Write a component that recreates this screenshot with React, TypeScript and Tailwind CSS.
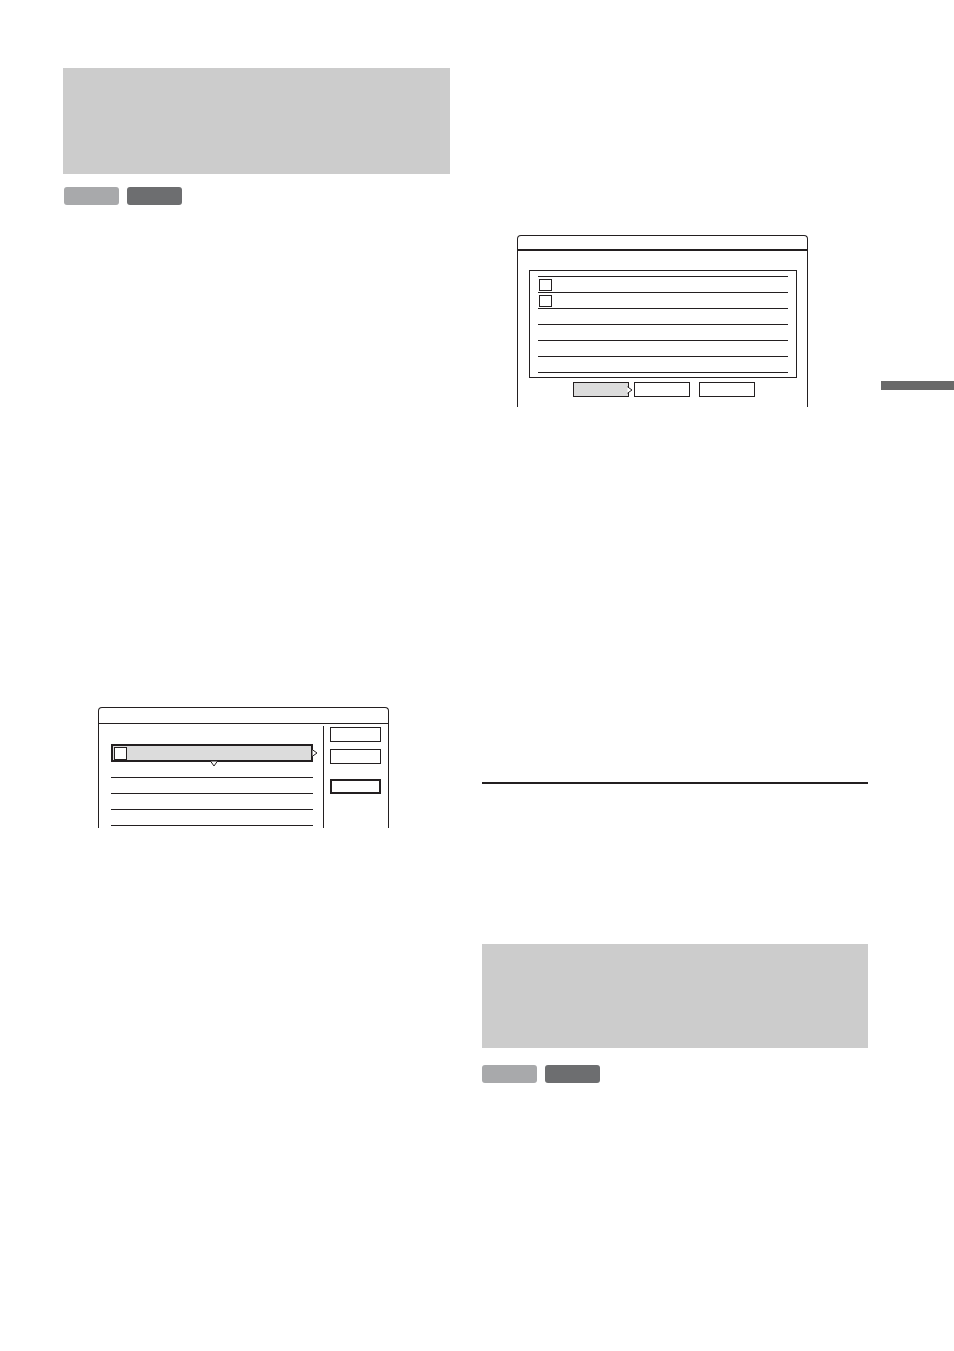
const rowLines = [0, 1, 2, 3];
const listRows = [true, true, false, false, false, false];

function Badges() {
  return (
    <div className="flex gap-2">
      <div className="h-[18px] w-[55px] rounded-[3px] bg-[#a8a9ab]" />
      <div className="h-[18px] w-[55px] rounded-[3px] bg-[#6d6e70]" />
    </div>
  );
}

function Arrow({ dir }: { dir: 'right' | 'down' }) {
  return dir === 'right' ? (
    <svg width="6" height="8" viewBox="0 0 6 8" className="block">
      <path d="M0.5 0.8 L5 4 L0.5 7.2" fill="#fff" stroke="#231f20" strokeWidth="1" />
    </svg>
  ) : (
    <svg width="8" height="6" viewBox="0 0 8 6" className="block">
      <path d="M0.8 0.5 L4 5 L7.2 0.5" fill="#fff" stroke="#231f20" strokeWidth="1" />
    </svg>
  );
}

function ListScreen() {
  return (
    <div className="ml-[35px] flex h-[121px] w-[291px] flex-col rounded-t-[4px] border-x border-t border-[#231f20]">
      {/* Header */}
      <div className="h-[16px] border-b border-[#231f20]" />

      <div className="flex flex-1">
        {/* Title rows */}
        <div className="w-[224px] pl-3 pt-[20px]">
          <div className="relative flex h-[18px] w-[202px] items-center border-2 border-[#231f20] bg-[#dcdcdc] pl-[1px]">
            <div className="h-[13px] w-[13px] border border-[#231f20] bg-white" />
            <div className="absolute -right-[7px] top-[3px]">
              <Arrow dir="right" />
            </div>
            <div className="absolute left-[97px] top-[15px]">
              <Arrow dir="down" />
            </div>
          </div>
          {rowLines.map((i) => (
            <div key={i} className="h-[16px] w-[202px] border-b border-[#231f20]" />
          ))}
        </div>

        {/* Divider + side buttons */}
        <div className="mt-[2px] flex-1 border-l border-[#231f20] pl-[6px] pt-[1px]">
          <div className="h-[15px] w-[51px] border border-[#231f20]" />
          <div className="mt-[7px] h-[15px] w-[51px] border border-[#231f20]" />
          <div className="mt-[15px] h-[15px] w-[51px] border-2 border-[#231f20]" />
        </div>
      </div>
    </div>
  );
}

function SelectScreen() {
  return (
    <div className="ml-[35px] flex h-[172px] w-[291px] flex-col rounded-t-[4px] border-x border-t border-[#231f20]">
      {/* Header */}
      <div className="h-[15px] border-b-2 border-[#231f20]" />

      <div className="pl-[11px] pt-[19px]">
        <div className="h-[108px] w-[268px] border-[1.5px] border-[#231f20] px-[8px] pt-[5px]">
          <div className="border-t border-[#231f20]" />
          {listRows.map((box, i) => (
            <div key={i} className="flex h-[16px] items-center border-b border-[#231f20] pl-[1px]">
              {box && <div className="h-[12px] w-[13px] border border-[#231f20]" />}
            </div>
          ))}
        </div>

        {/* Buttons */}
        <div className="mt-[4px] flex pl-[44px]">
          <div className="relative h-[15px] w-[56px] border border-[#231f20] bg-[#dcdcdc]">
            <div className="absolute -right-[5px] top-[3px]">
              <Arrow dir="right" />
            </div>
          </div>
          <div className="ml-[5px] h-[15px] w-[56px] border border-[#231f20]" />
          <div className="ml-[9px] h-[15px] w-[56px] border border-[#231f20]" />
        </div>
      </div>
    </div>
  );
}

export default function App() {
  return (
    <div className="flex h-[1351px] w-[954px] bg-white font-['Liberation_Sans',sans-serif]">
      {/* Left column */}
      <div className="ml-[63px] flex w-[387px] flex-col pt-[68px]">
        <div className="h-[106px] bg-[#cccccc]" />
        <div className="ml-[1px] mt-[13px]">
          <Badges />
        </div>
        <div className="mt-[502px]">
          <ListScreen />
        </div>
      </div>

      {/* Right column */}
      <div className="ml-[32px] flex w-[386px] flex-col pt-[235px]">
        <SelectScreen />
        <div className="mt-[375px] h-[2px] bg-[#231f20]" />
        <div className="mt-[160px] h-[104px] bg-[#cccccc]" />
        <div className="mt-[17px]">
          <Badges />
        </div>
      </div>

      {/* Thumb index tab */}
      <div className="flex flex-1 justify-end pt-[381px]">
        <div className="h-[9px] w-[73px] bg-[#696969]" />
      </div>
    </div>
  );
}
